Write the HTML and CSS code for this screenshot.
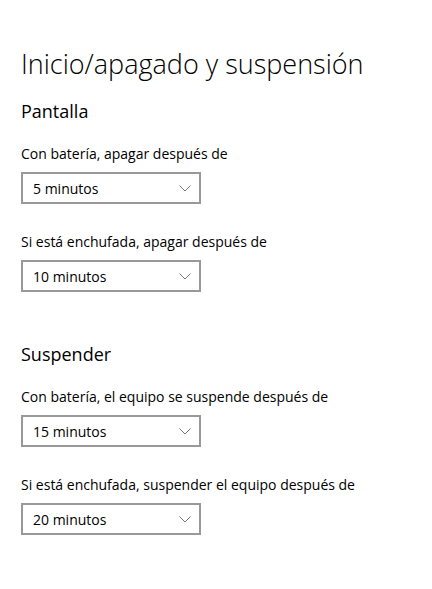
FILE: index.html
```html
<!DOCTYPE html>
<html>
  <head>
    <title>Inicio/apagado y suspensión</title>
    <link rel="stylesheet" href="styles.css">
  </head>
  <body>
    <div class="page">
      <h1 class="title">Inicio/apagado y suspensión</h1>

      <section class="group">
        <h2 class="group-title">Pantalla</h2>
        <div class="setting">
          <p class="label">Con batería, apagar después de</p>
          <div class="combo"><span>5 minutos</span><svg class="chevron" width="12" height="7" viewBox="0 0 12 7"><path d="M0.5 0.5 L6 6 L11.5 0.5" fill="none" stroke="#777" stroke-width="1"/></svg></div>
        </div>
        <div class="setting">
          <p class="label">Si está enchufada, apagar después de</p>
          <div class="combo"><span>10 minutos</span><svg class="chevron" width="12" height="7" viewBox="0 0 12 7"><path d="M0.5 0.5 L6 6 L11.5 0.5" fill="none" stroke="#777" stroke-width="1"/></svg></div>
        </div>
      </section>

      <section class="group">
        <h2 class="group-title">Suspender</h2>
        <div class="setting">
          <p class="label">Con batería, el equipo se suspende después de</p>
          <div class="combo"><span>15 minutos</span><svg class="chevron" width="12" height="7" viewBox="0 0 12 7"><path d="M0.5 0.5 L6 6 L11.5 0.5" fill="none" stroke="#777" stroke-width="1"/></svg></div>
        </div>
        <div class="setting">
          <p class="label">Si está enchufada, suspender el equipo después de</p>
          <div class="combo"><span>20 minutos</span><svg class="chevron" width="12" height="7" viewBox="0 0 12 7"><path d="M0.5 0.5 L6 6 L11.5 0.5" fill="none" stroke="#777" stroke-width="1"/></svg></div>
        </div>
      </section>
    </div>
  </body>
</html>
```

FILE: styles.css
```css
body {
  margin: 0;
  background: #fff;
  color: #000;
  font-family: "Open Sans", "Noto Sans", sans-serif;
}
.page {
  padding: 44px 0 0 21px;
}
.title {
  margin: 0;
  font-size: 27px;
  font-weight: 300;
  line-height: 40px;
}
.group {
  margin-top: 14px;
}
.group + .group {
  margin-top: 49px;
}
.group-title {
  margin: 0;
  font-size: 18px;
  font-weight: 400;
  line-height: 26px;
}
.setting {
  margin-top: 20px;
}
.setting + .setting {
  margin-top: 28px;
}
.label {
  margin: 0;
  font-size: 14px;
  line-height: 20px;
}
.combo {
  box-sizing: border-box;
  width: 180px;
  height: 32px;
  margin-top: 8px;
  border: 2px solid #999;
  display: flex;
  align-items: center;
  justify-content: space-between;
  padding: 0 8px 0 10px;
  font-size: 14px;
}
.chevron {
  display: block;
}
```
